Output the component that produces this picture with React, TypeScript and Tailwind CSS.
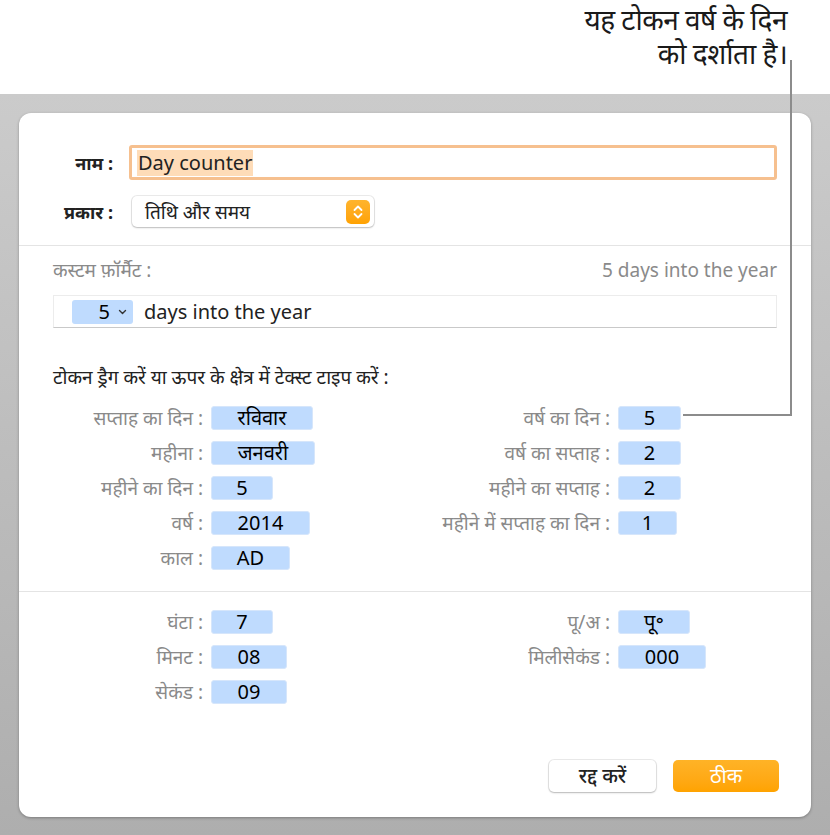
const font = {
  fontFamily: '"Noto Sans", "Noto Sans Devanagari", "Lohit Devanagari", sans-serif',
};

function Token({ children, w }: { children: React.ReactNode; w: string }) {
  return (
    <div
      className={`${w} h-[24px] rounded-[3px] bg-[#bfdbfe] border border-[#d6e6fb] flex items-center justify-center text-[20px] text-black leading-none`}
    >
      {children}
    </div>
  );
}

function Row({
  label,
  labelW,
  children,
}: {
  label: string;
  labelW: string;
  children: React.ReactNode;
}) {
  return (
    <div className="flex items-center h-[24px] gap-[8px]">
      <div className={`${labelW} text-right text-[19px] leading-[24px] text-[#8a8a8a] whitespace-nowrap`}>
        {label} :
      </div>
      {children}
    </div>
  );
}

export default function App() {
  return (
    <div className="relative w-[830px] h-[835px] bg-white overflow-hidden" style={font}>
      {/* callout */}
      <div className="absolute right-[43px] top-[2px] text-right text-[28px] leading-[34px] text-[#1a1a1a] tracking-[-0.5px]">
        <div>यह टोकन वर्ष के दिन</div>
        <div>को दर्शाता है।</div>
      </div>

      <div className="h-[94px]" />
      <div className="h-[741px] bg-gradient-to-b from-[#cbcbcb] to-[#aeaeae] pt-[19px] pl-[19px] pr-[19px]">
        <div className="w-[792px] h-[704px] bg-white rounded-[12px] shadow-[0_1px_3px_rgba(0,0,0,0.3)] flex flex-col">
          <div className="px-[34px] pt-[32px]">
            {/* name */}
            <div className="flex items-center gap-[17px]">
              <div className="w-[60px] text-right text-[18px] leading-[24px] font-bold text-[#222] whitespace-nowrap">नाम :</div>
              <div className="flex-1 h-[35px] rounded-[3px] border-[3px] border-[#f6c08f] flex items-center px-[5px] ml-[-1px]">
                <span className="bg-[#fedcb8] text-[20px] text-[#222] leading-[26px] px-[1px]">Day counter</span>
              </div>
            </div>
            {/* type */}
            <div className="flex items-center gap-[19px] mt-[16px]">
              <div className="w-[60px] text-right text-[18px] leading-[24px] font-bold text-[#222] whitespace-nowrap">प्रकार :</div>
              <div className="w-[242px] h-[31px] rounded-[5px] bg-white shadow-[0_0_0_1px_rgba(0,0,0,0.08),0_1px_2px_rgba(0,0,0,0.2)] flex items-center justify-between pl-[13px] pr-[4px]">
                <span className="text-[19px] leading-[24px] text-[#222]">तिथि और समय</span>
                <div className="w-[24px] h-[24px] rounded-[5px] bg-gradient-to-b from-[#ffb42c] to-[#ffa200] flex items-center justify-center">
                  <svg width="12" height="18" viewBox="0 0 12 18" fill="none">
                    <path d="M2.5 7 L6 3.5 L9.5 7" stroke="white" strokeWidth="1.8" strokeLinecap="round" strokeLinejoin="round" />
                    <path d="M2.5 11 L6 14.5 L9.5 11" stroke="white" strokeWidth="1.8" strokeLinecap="round" strokeLinejoin="round" />
                  </svg>
                </div>
              </div>
            </div>
          </div>

          <div className="h-px bg-[#e4e4e4] mt-[18px]" />

          <div className="px-[34px]">
            <div className="flex justify-between items-center mt-[12px] h-[24px] text-[#8a8a8a]">
              <span className="text-[19px] leading-[24px]">कस्टम फ़ॉर्मैट :</span>
              <span className="text-[19px] leading-[24px]">5 days into the year</span>
            </div>
            <div className="mt-[13px] h-[33px] border border-[#ececec] border-b-[#c9c9c9] flex items-center pl-[18px] gap-[11px]">
              <div className="w-[61px] h-[24px] rounded-[3px] bg-[#bfdbfe] flex items-center justify-end pr-[6px] gap-[8px]">
                <span className="text-[20px] text-black leading-none">5</span>
                <svg width="9" height="6" viewBox="0 0 9 6" fill="none">
                  <path d="M1.5 1.5 L4.5 4.5 L7.5 1.5" stroke="#333" strokeWidth="1.4" strokeLinecap="round" strokeLinejoin="round" />
                </svg>
              </div>
              <span className="text-[20px] leading-[24px] text-[#222]">days into the year</span>
            </div>

            <div className="mt-[37px] text-[19px] text-[#222] leading-[24px] whitespace-nowrap">
              टोकन ड्रैग करें या ऊपर के क्षेत्र में टेक्स्ट टाइप करें :
            </div>

            <div className="flex mt-[17px]">
              <div className="w-[367px] flex flex-col gap-[11px]">
                <Row label="सप्ताह का दिन" labelW="w-[150px]"><Token w="w-[102px]">रविवार</Token></Row>
                <Row label="महीना" labelW="w-[150px]"><Token w="w-[104px]">जनवरी</Token></Row>
                <Row label="महीने का दिन" labelW="w-[150px]"><Token w="w-[62px]">5</Token></Row>
                <Row label="वर्ष" labelW="w-[150px]"><Token w="w-[99px]">2014</Token></Row>
                <Row label="काल" labelW="w-[150px]"><Token w="w-[79px]">AD</Token></Row>
              </div>
              <div className="flex flex-col gap-[11px]">
                <Row label="वर्ष का दिन" labelW="w-[190px]"><Token w="w-[63px]">5</Token></Row>
                <Row label="वर्ष का सप्ताह" labelW="w-[190px]"><Token w="w-[63px]">2</Token></Row>
                <Row label="महीने का सप्ताह" labelW="w-[190px]"><Token w="w-[63px]">2</Token></Row>
                <Row label="महीने में सप्ताह का दिन" labelW="w-[190px]"><Token w="w-[59px]">1</Token></Row>
              </div>
            </div>
          </div>

          <div className="h-px bg-[#e4e4e4] mt-[21px]" />

          <div className="px-[34px] flex mt-[18px]">
            <div className="w-[367px] flex flex-col gap-[11px]">
              <Row label="घंटा" labelW="w-[150px]"><Token w="w-[62px]">7</Token></Row>
              <Row label="मिनट" labelW="w-[150px]"><Token w="w-[76px]">08</Token></Row>
              <Row label="सेकंड" labelW="w-[150px]"><Token w="w-[76px]">09</Token></Row>
            </div>
            <div className="flex flex-col gap-[11px]">
              <Row label="पू/अ" labelW="w-[190px]"><Token w="w-[72px]">पू॰</Token></Row>
              <Row label="मिलीसेकंड" labelW="w-[190px]"><Token w="w-[88px]">000</Token></Row>
            </div>
          </div>

          <div className="flex-1" />
          <div className="flex justify-end gap-[17px] px-[32px] pb-[25px]">
            <button className="w-[107px] h-[32px] rounded-[5px] bg-white shadow-[0_0_0_1px_rgba(0,0,0,0.08),0_1px_2px_rgba(0,0,0,0.22)] text-[20px] leading-[24px] font-medium text-[#222]">
              रद्द करें
            </button>
            <button className="w-[106px] h-[32px] rounded-[5px] bg-gradient-to-b from-[#ffb326] to-[#ffa300] text-[20px] leading-[24px] text-white">
              ठीक
            </button>
          </div>
        </div>
      </div>

      {/* callout line */}
      <svg className="absolute left-0 top-0 pointer-events-none" width="830" height="835">
        <path d="M791 60 V415 H683" stroke="#8c8c8c" strokeWidth="2" fill="none" />
      </svg>
    </div>
  );
}
